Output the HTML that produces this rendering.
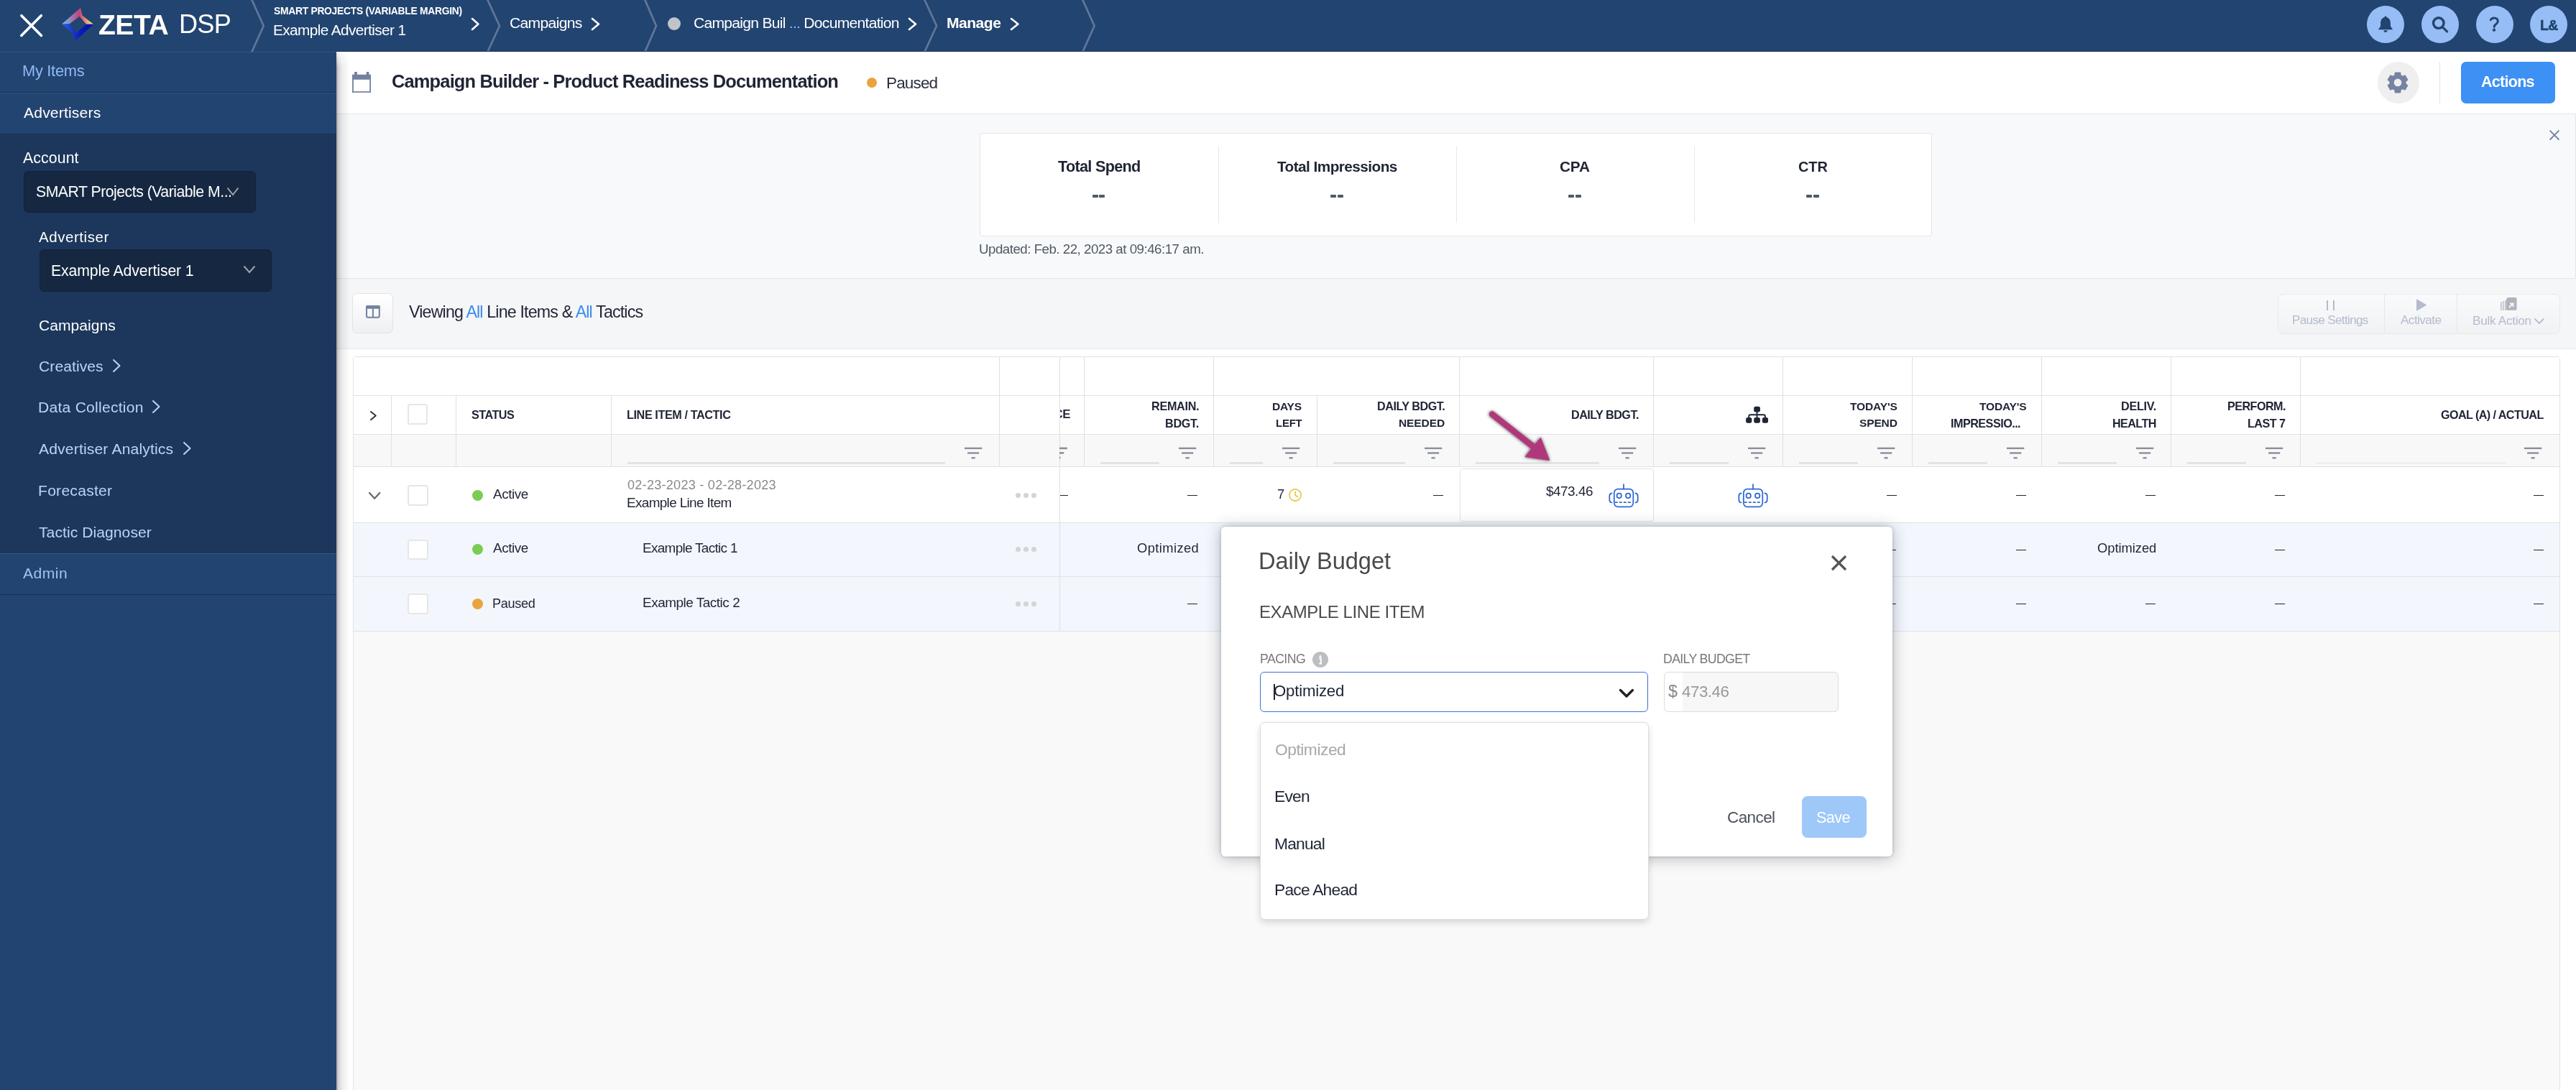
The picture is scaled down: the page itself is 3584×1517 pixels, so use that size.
<!DOCTYPE html>
<html><head><meta charset="utf-8"><style>
html,body{margin:0;padding:0;width:3584px;height:1517px;overflow:hidden;background:#fff}
body{position:relative;font-family:"Liberation Sans",sans-serif}
.t{position:absolute;white-space:nowrap;line-height:1em;will-change:transform}
svg{overflow:visible}
</style></head><body>
<div style="position:absolute;left:0.00px;top:0.00px;width:3584.00px;height:72.00px;background:#224470"></div>
<svg style="position:absolute;left:26px;top:17px" width="36" height="36" viewBox="0 0 36 36"><path d="M3.9 4.7L31.5 32.4M31.3 4.7L3.8 32.4" stroke="#fff" stroke-width="3.6" stroke-linecap="round"/></svg>
<svg style="position:absolute;left:84px;top:9px" width="50" height="50" viewBox="84 9 50 50">
<defs>
<linearGradient id="lg1" x1="86" y1="0" x2="130" y2="0" gradientUnits="userSpaceOnUse"><stop offset="0" stop-color="#5ec8f8"/><stop offset="0.55" stop-color="#c8407a"/><stop offset="1" stop-color="#fff27a"/></linearGradient>
<linearGradient id="lg2" x1="86" y1="0" x2="130" y2="0" gradientUnits="userSpaceOnUse"><stop offset="0" stop-color="#2a62e0"/><stop offset="0.6" stop-color="#0a1ab8"/><stop offset="1" stop-color="#0010a8"/></linearGradient>
</defs>
<path d="M86 33.6 L112 11 L114.5 21.5 L130 33.7 L120 33.7 L110.5 22.8 L96.5 33.6 Z" fill="url(#lg1)"/>
<path d="M86 33.6 L96.5 33.6 L106.2 46 L120 33.7 L130 33.7 L104.5 57 L102.3 47.5 Z" fill="url(#lg2)"/>
</svg>
<div class="t" id="zeta" style="top:14.93px;font-size:39.07px;color:#fff;font-weight:700;letter-spacing:-0.499px;left:137.06px;">ZETA</div>
<div class="t" id="dsp" style="top:16.38px;font-size:36.17px;color:#fff;letter-spacing:-0.789px;left:249.12px;">DSP</div>
<svg style="position:absolute;left:348.8px;top:0" width="22" height="72" viewBox="0 0 22 72"><path d="M1 -1 L17.7 36 L1 73" fill="none" stroke="#62769a" stroke-width="2.7"/></svg>
<svg style="position:absolute;left:677.0px;top:0" width="22" height="72" viewBox="0 0 22 72"><path d="M1 -1 L18.0 36 L1 73" fill="none" stroke="#62769a" stroke-width="2.7"/></svg>
<svg style="position:absolute;left:896.0px;top:0" width="22" height="72" viewBox="0 0 22 72"><path d="M1 -1 L17.0 36 L1 73" fill="none" stroke="#62769a" stroke-width="2.7"/></svg>
<svg style="position:absolute;left:1284.6px;top:0" width="22" height="72" viewBox="0 0 22 72"><path d="M1 -1 L18.1 36 L1 73" fill="none" stroke="#62769a" stroke-width="2.7"/></svg>
<svg style="position:absolute;left:1505.0px;top:0" width="22" height="72" viewBox="0 0 22 72"><path d="M1 -1 L17.6 36 L1 73" fill="none" stroke="#62769a" stroke-width="2.7"/></svg>
<div class="t" id="bc_acct" style="top:8.80px;font-size:13.83px;color:#fff;font-weight:700;letter-spacing:-0.262px;left:380.84px;">SMART PROJECTS (VARIABLE MARGIN)</div>
<div class="t" id="bc_adv" style="top:32.42px;font-size:20.76px;color:#fff;letter-spacing:-0.576px;left:379.79px;">Example Advertiser 1</div>
<svg style="position:absolute;left:652.6px;top:22.0px" width="16.4" height="23.0" viewBox="652.6 22.0 16.4 23.0"><path d="M656.6 26.0 L665.0 33.5 L656.6 41.0" fill="none" stroke="#fff" stroke-width="2.6" stroke-linecap="round" stroke-linejoin="round"/></svg>
<div class="t" id="bc_camp" style="top:21.16px;font-size:21.08px;color:#fff;letter-spacing:-0.661px;left:709.07px;">Campaigns</div>
<svg style="position:absolute;left:820.0px;top:22.0px" width="17.0" height="23.0" viewBox="820.0 22.0 17.0 23.0"><path d="M824.0 26.0 L833.0 33.5 L824.0 41.0" fill="none" stroke="#fff" stroke-width="2.6" stroke-linecap="round" stroke-linejoin="round"/></svg>
<div style="position:absolute;left:928.6px;top:24px;width:18px;height:18px;border-radius:50%;background:#c0c4ca"></div>
<div class="t" id="bc_cb" style="top:21.16px;font-size:21.08px;color:#fff;letter-spacing:-0.723px;left:964.87px;">Campaign Buil <span style="color:#8ab8f8">...</span> Documentation</div>
<svg style="position:absolute;left:1261.0px;top:22.0px" width="17.0" height="23.0" viewBox="1261.0 22.0 17.0 23.0"><path d="M1265.0 26.0 L1274.0 33.5 L1265.0 41.0" fill="none" stroke="#fff" stroke-width="2.6" stroke-linecap="round" stroke-linejoin="round"/></svg>
<div class="t" id="bc_man" style="top:21.16px;font-size:21.08px;color:#fff;font-weight:700;letter-spacing:-0.519px;left:1317.15px;">Manage</div>
<svg style="position:absolute;left:1402.6px;top:22.0px" width="17.4" height="23.0" viewBox="1402.6 22.0 17.4 23.0"><path d="M1406.6 26.0 L1416.0 33.5 L1406.6 41.0" fill="none" stroke="#fff" stroke-width="2.6" stroke-linecap="round" stroke-linejoin="round"/></svg>
<div style="position:absolute;left:3293px;top:8px;width:52px;height:52px;border-radius:50%;background:#97bdf6"></div>
<div style="position:absolute;left:3369px;top:8px;width:52px;height:52px;border-radius:50%;background:#97bdf6"></div>
<div style="position:absolute;left:3445px;top:8px;width:52px;height:52px;border-radius:50%;background:#97bdf6"></div>
<div style="position:absolute;left:3520px;top:8px;width:52px;height:52px;border-radius:50%;background:#97bdf6"></div>
<svg style="position:absolute;left:3303px;top:18px" width="32" height="32" viewBox="3303 18 32 32"><path d="M3319 22.5 c1 0 1.5 .7 1.5 1.5 c3.8 1.2 5.4 4.2 5.4 8.2 l0 3.2 c0 1.6 1.6 3.6 2.8 4.9 l0 1 l-19.4 0 l0 -1 c1.2 -1.3 2.8 -3.3 2.8 -4.9 l0 -3.2 c0 -4 1.6 -7 5.4 -8.2 c0 -.8 .5 -1.5 1.5 -1.5z" fill="#22446e"/><path d="M3316.3 42.2 l5.4 0 c0 1.6 -1.2 2.8 -2.7 2.8 c-1.5 0 -2.7 -1.2 -2.7 -2.8z" fill="#22446e"/></svg>
<svg style="position:absolute;left:3379px;top:18px" width="32" height="32" viewBox="3379 18 32 32"><circle cx="3392.8" cy="32.1" r="7.3" fill="none" stroke="#22446e" stroke-width="3.4"/><path d="M3398.2 37.6 L3404.6 43.8" stroke="#22446e" stroke-width="3.2" stroke-linecap="round"/></svg>
<svg style="position:absolute;left:3455px;top:18px" width="32" height="32" viewBox="3455 18 32 32"><path d="M3465.3 27.6 c1 -1.7 2.6 -2.6 4.8 -2.6 c3 0 5.2 1.8 5.2 4.4 c0 2.1 -1.2 3.2 -2.8 4.4 c-1.4 1 -2.2 1.9 -2.3 3.6" fill="none" stroke="#22446e" stroke-width="3" stroke-linecap="round"/><path d="M3467.9 40.9 L3470.9 39.8 L3472.1 42.6 L3469.1 43.7 Z" fill="#22446e" stroke="#22446e" stroke-width="0.8" stroke-linejoin="round"/></svg>
<div class="t" id="lamp" style="top:25.57px;font-size:19.29px;color:#22446e;font-weight:700;letter-spacing:-0.561px;left:3533.63px;-webkit-text-stroke:0.6px #22446e;">L&amp;</div>
<div style="position:absolute;left:0.00px;top:72.00px;width:468.00px;height:1445.00px;background:#224470"></div>
<div style="position:absolute;left:0.00px;top:72.00px;width:468.00px;height:1.00px;background:#2a5c80"></div>
<div style="position:absolute;left:0.00px;top:128.00px;width:468.00px;height:1.00px;background:#17304f"></div>
<div style="position:absolute;left:0.00px;top:129.00px;width:468.00px;height:1.00px;background:#2a5c80"></div>
<div style="position:absolute;left:0.00px;top:186.00px;width:468.00px;height:584.00px;background:#1d375c"></div>
<div style="position:absolute;left:0.00px;top:186.00px;width:468.00px;height:1.00px;background:#17304f"></div>
<div style="position:absolute;left:0.00px;top:770.00px;width:468.00px;height:1.00px;background:#2a5c80"></div>
<div style="position:absolute;left:0.00px;top:827.00px;width:468.00px;height:1.00px;background:#17304f"></div>
<div class="t" id="s_my" style="top:87.54px;font-size:21.80px;color:#8fb9f6;letter-spacing:-0.266px;left:31.24px;">My Items</div>
<div class="t" id="s_adv" style="top:145.96px;font-size:21.08px;color:#fff;letter-spacing:0.177px;left:32.67px;">Advertisers</div>
<div class="t" id="s_acct" style="top:208.94px;font-size:21.22px;color:#fff;letter-spacing:0.141px;left:32.18px;">Account</div>
<div style="position:absolute;left:32.50px;top:237.60px;width:323.30px;height:58.60px;background:#162841;border:1px solid #122139;box-sizing:border-box;border-radius:6px"></div>
<div class="t" id="s_acctv" style="top:255.64px;font-size:21.22px;color:#fff;letter-spacing:-0.484px;left:50.46px;">SMART Projects (Variable M...</div>
<svg style="position:absolute;left:314px;top:259px" width="22" height="16" viewBox="0 0 22 16"><path d="M2.5 2.5 L10 12 L17.5 2.5" fill="none" stroke="#a3a3a6" stroke-width="2"/></svg>
<div class="t" id="s_advl" style="top:319.65px;font-size:20.49px;color:#fff;letter-spacing:0.559px;left:54.18px;">Advertiser</div>
<div style="position:absolute;left:54.50px;top:347.00px;width:323.00px;height:59.30px;background:#162841;border:1px solid #122139;box-sizing:border-box;border-radius:6px"></div>
<div class="t" id="s_advv" style="top:366.34px;font-size:21.22px;color:#fff;letter-spacing:-0.096px;left:71.27px;">Example Advertiser 1</div>
<svg style="position:absolute;left:337px;top:368px" width="22" height="16" viewBox="0 0 22 16"><path d="M2.5 2.5 L10 11 L17.5 2.5" fill="none" stroke="#a3a3a6" stroke-width="2"/></svg>
<div class="t" id="s_camp" style="top:441.66px;font-size:21.08px;color:#fff;letter-spacing:0.020px;left:53.57px;">Campaigns</div>
<div class="t" id="s_cre" style="top:499.16px;font-size:21.08px;color:#bcd3f5;letter-spacing:0.075px;left:53.57px;">Creatives</div>
<svg style="position:absolute;left:153.5px;top:497.0px" width="16.5" height="24.0" viewBox="153.5 497.0 16.5 24.0"><path d="M157.5 501.0 L166.0 509.0 L157.5 517.0" fill="none" stroke="#bcd3f5" stroke-width="2.0" stroke-linecap="round" stroke-linejoin="round"/></svg>
<div class="t" id="s_dc" style="top:556.16px;font-size:21.08px;color:#bcd3f5;letter-spacing:0.252px;left:52.77px;">Data Collection</div>
<svg style="position:absolute;left:209.0px;top:554.0px" width="16.5" height="24.0" viewBox="209.0 554.0 16.5 24.0"><path d="M213.0 558.0 L221.5 566.0 L213.0 574.0" fill="none" stroke="#bcd3f5" stroke-width="2.0" stroke-linecap="round" stroke-linejoin="round"/></svg>
<div class="t" id="s_aa" style="top:614.16px;font-size:21.08px;color:#bcd3f5;letter-spacing:0.166px;left:54.17px;">Advertiser Analytics</div>
<svg style="position:absolute;left:251.5px;top:612.0px" width="16.5" height="24.0" viewBox="251.5 612.0 16.5 24.0"><path d="M255.5 616.0 L264.0 624.0 L255.5 632.0" fill="none" stroke="#bcd3f5" stroke-width="2.0" stroke-linecap="round" stroke-linejoin="round"/></svg>
<div class="t" id="s_fc" style="top:672.46px;font-size:21.08px;color:#bcd3f5;letter-spacing:0.257px;left:52.77px;">Forecaster</div>
<div class="t" id="s_td" style="top:729.66px;font-size:21.08px;color:#bcd3f5;letter-spacing:0.065px;left:54.00px;">Tactic Diagnoser</div>
<div class="t" id="s_admin" style="top:786.96px;font-size:21.08px;color:#9ec4f4;letter-spacing:0.476px;left:32.07px;">Admin</div>
<div style="position:absolute;left:468.00px;top:72.00px;width:3116.00px;height:1445.00px;background:#fff"></div>
<div style="position:absolute;left:468.00px;top:158.00px;width:3116.00px;height:1.00px;background:#e6e7ea"></div>
<div style="position:absolute;left:468.00px;top:71.00px;width:3116.00px;height:1.00px;background:#1a365c"></div>
<svg style="position:absolute;left:0;top:0" width="3584" height="200" viewBox="0 0 3584 200"><g fill="#7380a0"><rect x="490.1" y="103.8" width="25.9" height="7"/><rect x="490.1" y="103.8" width="1.8" height="25"/><rect x="514.2" y="103.8" width="1.8" height="25"/><rect x="490.1" y="127.1" width="25.9" height="1.7"/><rect x="493.1" y="100" width="3.8" height="4.5"/><rect x="509.7" y="100" width="3.7" height="4.5"/></g></svg>
<div class="t" id="title" style="top:101.46px;font-size:25.45px;color:#1f2435;font-weight:700;letter-spacing:-0.837px;left:545.09px;">Campaign Builder - Product Readiness Documentation</div>
<div style="position:absolute;left:1206px;top:108px;width:14px;height:14px;border-radius:50%;background:#eda33b"></div>
<div class="t" id="paused" style="top:104.53px;font-size:22.53px;color:#2a2f3f;letter-spacing:-0.852px;left:1233.20px;">Paused</div>
<div style="position:absolute;left:3308px;top:86px;width:58px;height:58px;border-radius:50%;background:#efefef"></div>
<svg style="position:absolute;left:3320px;top:98.5px" width="32" height="32" viewBox="-16 -16 32 32"><path d="M-4.36 -10.32 L-3.82 -14.09 L3.82 -14.09 L4.36 -10.32 A11.20 11.20 0 0 1 6.75 -8.94 L6.75 -8.94 L10.29 -10.36 L14.11 -3.73 L11.11 -1.38 A11.20 11.20 0 0 1 11.11 1.38 L11.11 1.38 L14.11 3.73 L10.29 10.36 L6.75 8.94 A11.20 11.20 0 0 1 4.36 10.32 L4.36 10.32 L3.82 14.09 L-3.82 14.09 L-4.36 10.32 A11.20 11.20 0 0 1 -6.75 8.94 L-6.75 8.94 L-10.29 10.36 L-14.11 3.73 L-11.11 1.38 A11.20 11.20 0 0 1 -11.11 -1.38 L-11.11 -1.38 L-14.11 -3.73 L-10.29 -10.36 L-6.75 -8.94 A11.20 11.20 0 0 1 -4.36 -10.32 Z" fill="#7682a2" stroke="#7682a2" stroke-width="0.8" stroke-linejoin="round"/><circle cx="0" cy="-0.1" r="5.3" fill="#efefef"/></svg>
<div style="position:absolute;left:3394.00px;top:86.00px;width:1.00px;height:58.00px;background:#e2e2e2"></div>
<div style="position:absolute;left:3424.00px;top:86.00px;width:131.00px;height:58.00px;background:#3d90f4;border-radius:7px"></div>
<div class="t" id="actions" style="top:103.81px;font-size:21.49px;color:#fff;font-weight:700;letter-spacing:-0.707px;left:3452.28px;">Actions</div>
<div style="position:absolute;left:468.00px;top:159.00px;width:3116.00px;height:228.00px;background:#f8f9fb"></div>
<div style="position:absolute;left:468.00px;top:387.00px;width:3116.00px;height:1.00px;background:#e4e6ea"></div>
<div style="position:absolute;left:3583.00px;top:159.00px;width:1.00px;height:228.00px;background:#e4e6ea"></div>
<div style="position:absolute;left:1363.00px;top:185.00px;width:1325.00px;height:144.00px;background:#fff;border:1px solid #e3e5e9;border-radius:4px;box-sizing:border-box"></div>
<div style="position:absolute;left:1694.60px;top:204.00px;width:1.00px;height:106.00px;background:#e6e7ea"></div>
<div style="position:absolute;left:2025.60px;top:204.00px;width:1.00px;height:106.00px;background:#e6e7ea"></div>
<div style="position:absolute;left:2356.60px;top:204.00px;width:1.00px;height:106.00px;background:#e6e7ea"></div>
<div class="t" id="sum0" style="top:221.49px;font-size:21.63px;color:#1f2435;font-weight:700;letter-spacing:-0.683px;left:1471.93px;">Total Spend</div>
<div style="position:absolute;left:1519.50px;top:268.00px;width:19.00px;height:8.00px;background:transparent"></div>
<div style="position:absolute;left:1519.7px;top:271px;width:8.1px;height:3.8px;background:#4f5b63;border-radius:1px"></div><div style="position:absolute;left:1529.4px;top:271px;width:8.1px;height:3.8px;background:#4f5b63;border-radius:1px"></div>
<div class="t" id="sum1" style="top:222.22px;font-size:20.76px;color:#1f2435;font-weight:700;letter-spacing:-0.540px;left:1776.65px;">Total Impressions</div>
<div style="position:absolute;left:1850.70px;top:268.00px;width:19.00px;height:8.00px;background:transparent"></div>
<div style="position:absolute;left:1850.9px;top:271px;width:8.1px;height:3.8px;background:#4f5b63;border-radius:1px"></div><div style="position:absolute;left:1860.6px;top:271px;width:8.1px;height:3.8px;background:#4f5b63;border-radius:1px"></div>
<div class="t" id="sum2" style="top:222.22px;font-size:20.76px;color:#1f2435;font-weight:700;letter-spacing:-0.132px;left:2170.32px;">CPA</div>
<div style="position:absolute;left:2181.90px;top:268.00px;width:19.00px;height:8.00px;background:transparent"></div>
<div style="position:absolute;left:2182.1px;top:271px;width:8.1px;height:3.8px;background:#4f5b63;border-radius:1px"></div><div style="position:absolute;left:2191.8px;top:271px;width:8.1px;height:3.8px;background:#4f5b63;border-radius:1px"></div>
<div class="t" id="sum3" style="top:222.93px;font-size:19.93px;color:#1f2435;font-weight:700;letter-spacing:-0.016px;left:2502.06px;">CTR</div>
<div style="position:absolute;left:2513.10px;top:268.00px;width:19.00px;height:8.00px;background:transparent"></div>
<div style="position:absolute;left:2513.3px;top:271px;width:8.1px;height:3.8px;background:#4f5b63;border-radius:1px"></div><div style="position:absolute;left:2523.0px;top:271px;width:8.1px;height:3.8px;background:#4f5b63;border-radius:1px"></div>
<div class="t" id="updated" style="top:338.17px;font-size:18.70px;color:#4f5a63;letter-spacing:-0.487px;left:1361.93px;">Updated: Feb. 22, 2023 at 09:46:17 am.</div>
<svg style="position:absolute;left:3545px;top:179px" width="18" height="18" viewBox="0 0 18 18"><path d="M2.6 2.7 L15.4 15.5 M15.4 2.7 L2.6 15.5" stroke="#7380a0" stroke-width="1.8"/></svg>
<div style="position:absolute;left:468.00px;top:388.00px;width:3116.00px;height:97.00px;background:#f5f6f8"></div>
<div style="position:absolute;left:468.00px;top:485.00px;width:3116.00px;height:1.00px;background:#e6e7ea"></div>
<div style="position:absolute;left:490.30px;top:408.30px;width:56.40px;height:56.20px;background:linear-gradient(#ffffff,#f9f9fa 40%,#eff0f2);border:1px solid #e2e3e5;border-radius:7px;box-sizing:border-box"></div>
<svg style="position:absolute;left:507px;top:423px" width="24" height="22" viewBox="0 0 24 22"><rect x="3" y="3" width="17.8" height="15.8" rx="2" fill="none" stroke="#7380a0" stroke-width="2"/><rect x="2.2" y="2.1" width="19.4" height="4.6" rx="1.2" fill="#7380a0"/><path d="M11.9 5 V18.5" stroke="#7380a0" stroke-width="2"/></svg>
<div class="t" id="viewing" style="top:423.01px;font-size:23.26px;color:#1f2435;letter-spacing:-0.851px;left:568.64px;">Viewing <span style="color:#3d8cf0">All</span> Line Items &amp; <span style="color:#3d8cf0">All</span> Tactics</div>
<div style="position:absolute;left:3168.50px;top:408.60px;width:393.00px;height:56.00px;background:linear-gradient(#f9fafb,#f1f2f4);border:1px solid #e8e9ec;border-radius:8px;box-sizing:border-box"></div>
<div style="position:absolute;left:3317.00px;top:409.00px;width:1.00px;height:54.00px;background:#e6e7ea"></div>
<div style="position:absolute;left:3418.00px;top:409.00px;width:1.00px;height:54.00px;background:#e6e7ea"></div>
<div style="position:absolute;left:3237.40px;top:417.80px;width:1.70px;height:14.00px;background:#b3bbcc"></div>
<div style="position:absolute;left:3246.40px;top:417.80px;width:1.70px;height:14.00px;background:#b3bbcc"></div>
<svg style="position:absolute;left:3360px;top:415px" width="18" height="20" viewBox="0 0 18 20"><path d="M2 2.5 Q2 1 3.3 1.8 L15.2 8.8 Q16.3 9.5 15.2 10.2 L3.3 17.2 Q2 18 2 16.5 Z" fill="#b3bbcc"/></svg>
<svg style="position:absolute;left:3477px;top:413px" width="26" height="21" viewBox="3477 413 26 21"><path d="M3480 420 Q3479.3 426 3480 432 M3483 419 Q3482.3 425.5 3483 432 M3486 418 Q3485.3 425 3486 432" fill="none" stroke="#b0b4bc" stroke-width="1.3"/><path d="M3489 414 H3500 Q3501.5 414 3501.5 415.5 V430.3 Q3501.5 431.8 3500 431.8 H3488.5 Q3487 431.8 3487 430.3 V416 Z" fill="#b0b4bc"/><path d="M3491 428 L3495.5 423 M3492 422.5 L3496.5 422.5 L3496.5 427" fill="none" stroke="#f4f5f7" stroke-width="2"/></svg>
<div class="t" id="tb_pause" style="top:436.98px;font-size:17.15px;color:#b3bbcc;letter-spacing:-0.683px;left:3188.55px;">Pause Settings</div>
<div class="t" id="tb_act" style="top:436.98px;font-size:17.15px;color:#b3bbcc;letter-spacing:-0.560px;left:3339.68px;">Activate</div>
<div class="t" id="tb_bulk" style="top:438.48px;font-size:17.15px;color:#b3bbcc;letter-spacing:-0.286px;left:3439.55px;">Bulk Action</div>
<svg style="position:absolute;left:3523.0px;top:440.0px" width="19.7" height="14.0" viewBox="3523.0 440.0 19.7 14.0"><path d="M3527.0 444.0 L3532.8 450.0 L3538.7 444.0" fill="none" stroke="#b3bbcc" stroke-width="1.8" stroke-linecap="round" stroke-linejoin="round"/></svg>
<div style="position:absolute;left:468.00px;top:486.00px;width:3116.00px;height:1031.00px;background:#fff"></div>
<div style="position:absolute;left:490.50px;top:496.00px;width:3071.00px;height:1021.00px;background:#f9f9f9;border:1px solid #e2e2e2;border-bottom:none;box-sizing:border-box;border-radius:4px 4px 0 0"></div>
<div style="position:absolute;left:491.50px;top:497.00px;width:3069.00px;height:107.00px;background:#fff"></div>
<div style="position:absolute;left:491.50px;top:604.00px;width:3069.00px;height:45.00px;background:#f8f8f8"></div>
<div style="position:absolute;left:491.50px;top:649.00px;width:3069.00px;height:78.00px;background:#fff"></div>
<div style="position:absolute;left:491.50px;top:727.00px;width:3069.00px;height:151.00px;background:#f3f6fd"></div>
<div style="position:absolute;left:490.50px;top:550.00px;width:3071.00px;height:1.30px;background:#e2e2e2"></div>
<div style="position:absolute;left:490.50px;top:604.00px;width:3071.00px;height:1.30px;background:#e2e2e2"></div>
<div style="position:absolute;left:490.50px;top:649.00px;width:3071.00px;height:1.30px;background:#e2e2e2"></div>
<div style="position:absolute;left:490.50px;top:727.00px;width:3071.00px;height:1.30px;background:#e2e2e2"></div>
<div style="position:absolute;left:490.50px;top:802.00px;width:3071.00px;height:1.30px;background:#e2e2e2"></div>
<div style="position:absolute;left:490.50px;top:878.00px;width:3071.00px;height:1.30px;background:#e2e2e2"></div>
<div style="position:absolute;left:544.00px;top:550.00px;width:1.20px;height:99.00px;background:#e0e0e0"></div>
<div style="position:absolute;left:634.00px;top:550.00px;width:1.20px;height:99.00px;background:#e0e0e0"></div>
<div style="position:absolute;left:850.00px;top:550.00px;width:1.20px;height:99.00px;background:#e0e0e0"></div>
<div style="position:absolute;left:1832.00px;top:550.00px;width:1.20px;height:99.00px;background:#e0e0e0"></div>
<div style="position:absolute;left:1390.00px;top:496.00px;width:1.20px;height:153.00px;background:#e0e0e0"></div>
<div style="position:absolute;left:1508.00px;top:496.00px;width:1.20px;height:153.00px;background:#e0e0e0"></div>
<div style="position:absolute;left:1688.00px;top:496.00px;width:1.20px;height:153.00px;background:#e0e0e0"></div>
<div style="position:absolute;left:2030.00px;top:496.00px;width:1.20px;height:153.00px;background:#e0e0e0"></div>
<div style="position:absolute;left:2300.00px;top:496.00px;width:1.20px;height:153.00px;background:#e0e0e0"></div>
<div style="position:absolute;left:2480.00px;top:496.00px;width:1.20px;height:153.00px;background:#e0e0e0"></div>
<div style="position:absolute;left:2660.00px;top:496.00px;width:1.20px;height:153.00px;background:#e0e0e0"></div>
<div style="position:absolute;left:2840.00px;top:496.00px;width:1.20px;height:153.00px;background:#e0e0e0"></div>
<div style="position:absolute;left:3020.00px;top:496.00px;width:1.20px;height:153.00px;background:#e0e0e0"></div>
<div style="position:absolute;left:3200.00px;top:496.00px;width:1.20px;height:153.00px;background:#e0e0e0"></div>
<div style="position:absolute;left:1474.00px;top:496.00px;width:1.20px;height:382.00px;background:#e0e0e0"></div>
<div class="t" id="h_status" style="top:569.10px;font-size:16.19px;color:#1f2435;font-weight:700;letter-spacing:-0.531px;left:655.79px;">STATUS</div>
<div class="t" id="h_li" style="top:568.80px;font-size:16.19px;color:#1f2435;font-weight:700;letter-spacing:-0.399px;left:871.69px;">LINE ITEM / TACTIC</div>
<div style="position:absolute;left:1475px;top:560px;width:33px;height:30px;overflow:hidden"><div class="t" style="right:19.5px;top:8.73px;font-size:16.86px;font-weight:700;letter-spacing:-0.6px;color:#1f2435">SPACE</div></div>
<div class="t" id="h2a0" style="top:557.20px;font-size:16.19px;color:#1f2435;font-weight:700;letter-spacing:-0.297px;right:1915.85px;">REMAIN.</div>
<div class="t" id="h2b0" style="top:580.60px;font-size:16.19px;color:#1f2435;font-weight:700;letter-spacing:-0.309px;right:1915.87px;">BDGT.</div>
<div class="t" id="h2a1" style="top:557.75px;font-size:15.54px;color:#1f2435;font-weight:700;letter-spacing:-0.191px;right:1772.59px;">DAYS</div>
<div class="t" id="h2b1" style="top:581.67px;font-size:14.92px;color:#1f2435;font-weight:700;letter-spacing:-0.210px;right:1773.09px;">LEFT</div>
<div class="t" id="h2a2" style="top:557.20px;font-size:16.19px;color:#1f2435;font-weight:700;letter-spacing:-0.499px;right:1574.03px;">DAILY BDGT.</div>
<div class="t" id="h2b2" style="top:581.15px;font-size:15.54px;color:#1f2435;font-weight:700;letter-spacing:-0.105px;right:1574.16px;">NEEDED</div>
<div class="t" id="h2a3" style="top:557.75px;font-size:15.54px;color:#1f2435;font-weight:700;letter-spacing:-0.137px;right:944.63px;">TODAY'S</div>
<div class="t" id="h2b3" style="top:581.15px;font-size:15.54px;color:#1f2435;font-weight:700;letter-spacing:-0.152px;right:944.66px;">SPEND</div>
<div class="t" id="h2a4" style="top:557.75px;font-size:15.54px;color:#1f2435;font-weight:700;letter-spacing:-0.178px;right:764.83px;">TODAY'S</div>
<div class="t" id="h2b4" style="top:580.60px;font-size:16.19px;color:#1f2435;font-weight:700;letter-spacing:-0.529px;right:772.45px;">IMPRESSIO...</div>
<div class="t" id="h2a5" style="top:557.20px;font-size:16.19px;color:#1f2435;font-weight:700;letter-spacing:-0.263px;right:583.79px;">DELIV.</div>
<div class="t" id="h2b5" style="top:580.60px;font-size:16.19px;color:#1f2435;font-weight:700;letter-spacing:-0.601px;right:584.26px;">HEALTH</div>
<div class="t" id="h2a6" style="top:557.20px;font-size:16.19px;color:#1f2435;font-weight:700;letter-spacing:-0.565px;right:403.91px;">PERFORM.</div>
<div class="t" id="h2b6" style="top:580.60px;font-size:16.19px;color:#1f2435;font-weight:700;letter-spacing:-0.570px;right:404.19px;">LAST 7</div>
<div class="t" id="h_db" style="top:569.30px;font-size:16.19px;color:#1f2435;font-weight:700;letter-spacing:-0.540px;right:1304.44px;">DAILY BDGT.</div>
<div class="t" id="h_goal" style="top:569.30px;font-size:16.19px;color:#1f2435;font-weight:700;letter-spacing:-0.597px;right:45.12px;">GOAL (A) / ACTUAL</div>
<svg style="position:absolute;left:2427px;top:563px" width="36" height="30" viewBox="0 0 36 30"><g fill="#1f2435"><rect x="13.2" y="2.7" width="8.7" height="7.9" rx="2.4"/><rect x="2.1" y="18" width="8.2" height="7.8" rx="2.4"/><rect x="13.2" y="18" width="8.7" height="7.8" rx="2.4"/><rect x="24.8" y="18" width="8.2" height="7.8" rx="2.4"/></g><path d="M17.5 9 V18.5 M6.2 18.5 V16.6 Q6.2 14.3 8.5 14.3 H26.6 Q28.9 14.3 28.9 16.6 V18.5" fill="none" stroke="#1f2435" stroke-width="1.9"/></svg>
<svg style="position:absolute;left:511.5px;top:568.8px" width="14.8" height="19.2" viewBox="511.5 568.8 14.8 19.2"><path d="M515.5 572.8 L522.3 578.4 L515.5 584.0" fill="none" stroke="#333" stroke-width="2.0" stroke-linecap="round" stroke-linejoin="round"/></svg>
<div style="position:absolute;left:566.50px;top:562.00px;width:28.30px;height:28.50px;border:2.8px solid #e6e6e6;border-radius:3.5px;box-sizing:border-box;background:#fff"></div>
<svg style="position:absolute;left:1341.6px;top:622px" width="25" height="18" viewBox="0 0 25 18"><g fill="#8a8f99"><rect x="0" y="0.7" width="24.3" height="2.4"/><rect x="4.1" y="7.3" width="16.1" height="2.4"/><rect x="9.5" y="14.1" width="5.2" height="2.4"/></g></svg>
<div style="position:absolute;left:872.70px;top:643.00px;width:442.80px;height:2.60px;background:#e3e3e3"></div>
<svg style="position:absolute;left:1639.6px;top:622px" width="25" height="18" viewBox="0 0 25 18"><g fill="#8a8f99"><rect x="0" y="0.7" width="24.3" height="2.4"/><rect x="4.1" y="7.3" width="16.1" height="2.4"/><rect x="9.5" y="14.1" width="5.2" height="2.4"/></g></svg>
<div style="position:absolute;left:1530.70px;top:643.00px;width:82.80px;height:2.60px;background:#e3e3e3"></div>
<svg style="position:absolute;left:1783.6px;top:622px" width="25" height="18" viewBox="0 0 25 18"><g fill="#8a8f99"><rect x="0" y="0.7" width="24.3" height="2.4"/><rect x="4.1" y="7.3" width="16.1" height="2.4"/><rect x="9.5" y="14.1" width="5.2" height="2.4"/></g></svg>
<div style="position:absolute;left:1710.70px;top:643.00px;width:46.80px;height:2.60px;background:#e3e3e3"></div>
<svg style="position:absolute;left:1981.6px;top:622px" width="25" height="18" viewBox="0 0 25 18"><g fill="#8a8f99"><rect x="0" y="0.7" width="24.3" height="2.4"/><rect x="4.1" y="7.3" width="16.1" height="2.4"/><rect x="9.5" y="14.1" width="5.2" height="2.4"/></g></svg>
<div style="position:absolute;left:1854.70px;top:643.00px;width:100.80px;height:2.60px;background:#e3e3e3"></div>
<svg style="position:absolute;left:2251.6px;top:622px" width="25" height="18" viewBox="0 0 25 18"><g fill="#8a8f99"><rect x="0" y="0.7" width="24.3" height="2.4"/><rect x="4.1" y="7.3" width="16.1" height="2.4"/><rect x="9.5" y="14.1" width="5.2" height="2.4"/></g></svg>
<div style="position:absolute;left:2052.70px;top:643.00px;width:172.80px;height:2.60px;background:#e3e3e3"></div>
<svg style="position:absolute;left:2431.6px;top:622px" width="25" height="18" viewBox="0 0 25 18"><g fill="#8a8f99"><rect x="0" y="0.7" width="24.3" height="2.4"/><rect x="4.1" y="7.3" width="16.1" height="2.4"/><rect x="9.5" y="14.1" width="5.2" height="2.4"/></g></svg>
<div style="position:absolute;left:2322.70px;top:643.00px;width:82.80px;height:2.60px;background:#e3e3e3"></div>
<svg style="position:absolute;left:2611.6px;top:622px" width="25" height="18" viewBox="0 0 25 18"><g fill="#8a8f99"><rect x="0" y="0.7" width="24.3" height="2.4"/><rect x="4.1" y="7.3" width="16.1" height="2.4"/><rect x="9.5" y="14.1" width="5.2" height="2.4"/></g></svg>
<div style="position:absolute;left:2502.70px;top:643.00px;width:82.80px;height:2.60px;background:#e3e3e3"></div>
<svg style="position:absolute;left:2791.6px;top:622px" width="25" height="18" viewBox="0 0 25 18"><g fill="#8a8f99"><rect x="0" y="0.7" width="24.3" height="2.4"/><rect x="4.1" y="7.3" width="16.1" height="2.4"/><rect x="9.5" y="14.1" width="5.2" height="2.4"/></g></svg>
<div style="position:absolute;left:2682.70px;top:643.00px;width:82.80px;height:2.60px;background:#e3e3e3"></div>
<svg style="position:absolute;left:2971.6px;top:622px" width="25" height="18" viewBox="0 0 25 18"><g fill="#8a8f99"><rect x="0" y="0.7" width="24.3" height="2.4"/><rect x="4.1" y="7.3" width="16.1" height="2.4"/><rect x="9.5" y="14.1" width="5.2" height="2.4"/></g></svg>
<div style="position:absolute;left:2862.70px;top:643.00px;width:82.80px;height:2.60px;background:#e3e3e3"></div>
<svg style="position:absolute;left:3151.6px;top:622px" width="25" height="18" viewBox="0 0 25 18"><g fill="#8a8f99"><rect x="0" y="0.7" width="24.3" height="2.4"/><rect x="4.1" y="7.3" width="16.1" height="2.4"/><rect x="9.5" y="14.1" width="5.2" height="2.4"/></g></svg>
<div style="position:absolute;left:3042.70px;top:643.00px;width:82.80px;height:2.60px;background:#e3e3e3"></div>
<svg style="position:absolute;left:3512.1px;top:622px" width="25" height="18" viewBox="0 0 25 18"><g fill="#8a8f99"><rect x="0" y="0.7" width="24.3" height="2.4"/><rect x="4.1" y="7.3" width="16.1" height="2.4"/><rect x="9.5" y="14.1" width="5.2" height="2.4"/></g></svg>
<div style="position:absolute;left:3222.70px;top:644.00px;width:263.10px;height:1.30px;background:#e3e3e3"></div>
<div style="position:absolute;left:1474px;top:620px;width:11px;height:22px;overflow:hidden"><svg style="position:absolute;left:-14px;top:2px" width="25" height="18" viewBox="0 0 25 18"><g fill="#8a8f99"><rect x="0" y="0.6" width="24.8" height="2.6"/><rect x="4.6" y="7.1" width="15.6" height="2.6"/><rect x="9.4" y="13.6" width="6" height="2.6"/></g></svg></div>
<svg style="position:absolute;left:510.0px;top:682.2px" width="22.3" height="15.7" viewBox="510.0 682.2 22.3 15.7"><path d="M514.0 686.2 L521.1 693.9 L528.3 686.2" fill="none" stroke="#666" stroke-width="2.2" stroke-linecap="round" stroke-linejoin="round"/></svg>
<div style="position:absolute;left:567.40px;top:675.00px;width:28.60px;height:28.60px;border:2.8px solid #e6e6e6;border-radius:3.5px;box-sizing:border-box;background:#fff"></div>
<div style="position:absolute;left:567.40px;top:750.50px;width:28.60px;height:28.60px;border:2.8px solid #e6e6e6;border-radius:3.5px;box-sizing:border-box;background:#fff"></div>
<div style="position:absolute;left:567.40px;top:826.00px;width:28.60px;height:28.60px;border:2.8px solid #e6e6e6;border-radius:3.5px;box-sizing:border-box;background:#fff"></div>
<div style="position:absolute;left:657.0px;top:681.8px;width:15.0px;height:15.0px;border-radius:50%;background:#78cd52"></div>
<div class="t" id="r1_st" style="top:678.91px;font-size:18.90px;color:#1f2435;letter-spacing:-0.453px;left:686.18px;">Active</div>
<div style="position:absolute;left:657.0px;top:757.3px;width:15.0px;height:15.0px;border-radius:50%;background:#78cd52"></div>
<div class="t" id="r2_st" style="top:754.41px;font-size:18.90px;color:#1f2435;letter-spacing:-0.453px;left:686.18px;">Active</div>
<div style="position:absolute;left:657.0px;top:832.8px;width:15.0px;height:15.0px;border-radius:50%;background:#e9a43f"></div>
<div class="t" id="r3_st" style="top:830.54px;font-size:18.14px;color:#1f2435;letter-spacing:-0.330px;left:684.99px;">Paused</div>
<div class="t" id="r1_date" style="top:665.74px;font-size:18.02px;color:#8a8a8a;letter-spacing:0.283px;left:872.79px;">02-23-2023 - 02-28-2023</div>
<div class="t" id="r1_name" style="top:690.51px;font-size:18.90px;color:#1f2435;letter-spacing:-0.638px;left:871.92px;">Example Line Item</div>
<div class="t" id="r2_name" style="top:754.41px;font-size:18.90px;color:#1f2435;letter-spacing:-0.664px;left:893.62px;">Example Tactic 1</div>
<div class="t" id="r3_name" style="top:829.91px;font-size:18.90px;color:#1f2435;letter-spacing:-0.452px;left:893.62px;">Example Tactic 2</div>
<div style="position:absolute;left:1412.9px;top:685.7px;width:7.2px;height:7.2px;border-radius:50%;background:#d4d4d4"></div>
<div style="position:absolute;left:1423.9px;top:685.7px;width:7.2px;height:7.2px;border-radius:50%;background:#d4d4d4"></div>
<div style="position:absolute;left:1434.9px;top:685.7px;width:7.2px;height:7.2px;border-radius:50%;background:#d4d4d4"></div>
<div style="position:absolute;left:1412.9px;top:761.2px;width:7.2px;height:7.2px;border-radius:50%;background:#d4d4d4"></div>
<div style="position:absolute;left:1423.9px;top:761.2px;width:7.2px;height:7.2px;border-radius:50%;background:#d4d4d4"></div>
<div style="position:absolute;left:1434.9px;top:761.2px;width:7.2px;height:7.2px;border-radius:50%;background:#d4d4d4"></div>
<div style="position:absolute;left:1412.9px;top:836.7px;width:7.2px;height:7.2px;border-radius:50%;background:#d4d4d4"></div>
<div style="position:absolute;left:1423.9px;top:836.7px;width:7.2px;height:7.2px;border-radius:50%;background:#d4d4d4"></div>
<div style="position:absolute;left:1434.9px;top:836.7px;width:7.2px;height:7.2px;border-radius:50%;background:#d4d4d4"></div>
<div style="position:absolute;left:1474.60px;top:688.80px;width:11.40px;height:1.40px;background:#1f2435"></div>
<div style="position:absolute;left:1651.50px;top:688.80px;width:14.50px;height:1.40px;background:#1f2435"></div>
<div class="t" id="r2_opt" style="top:754.40px;font-size:18.31px;color:#1f2435;letter-spacing:0.425px;right:1916.13px;">Optimized</div>
<div style="position:absolute;left:1651.50px;top:839.60px;width:14.50px;height:1.40px;background:#1f2435"></div>
<div class="t" id="r1_7" style="top:678.77px;font-size:18.46px;color:#1f2435;right:1796.46px;">7</div>
<svg style="position:absolute;left:1792px;top:680px" width="20" height="20" viewBox="0 0 20 20"><circle cx="10" cy="9" r="8.1" fill="none" stroke="#e9c43c" stroke-width="1.6"/><path d="M10.2 4.3 V9.3 L13.6 11.7" fill="none" stroke="#e9c43c" stroke-width="1.6" stroke-linecap="round" stroke-linejoin="round"/></svg>
<div style="position:absolute;left:1993.50px;top:688.80px;width:14.50px;height:1.40px;background:#1f2435"></div>
<div style="position:absolute;left:2031.00px;top:652.40px;width:270.00px;height:74.10px;background:#fff;border:1px solid #e2e2e2;border-radius:4px;box-sizing:border-box"></div>
<div class="t" id="r1_db" style="top:674.51px;font-size:18.90px;color:#1f2435;letter-spacing:-0.476px;right:1367.77px;">$473.46</div>
<svg style="position:absolute;left:2237.5px;top:672.5px" width="42" height="36" viewBox="0 0 42 36"><g fill="none" stroke="#2d68d4" stroke-width="1.75" stroke-linecap="round"><rect x="7.8" y="7.5" width="26.5" height="24.8" rx="5.2"/><path d="M21 1 V7.5"/><circle cx="14.7" cy="16.9" r="3.2"/><circle cx="27.2" cy="16.9" r="3.2"/><path d="M9.5 26.1 H33" stroke-dasharray="2.6 3.4" stroke-linecap="round"/><path d="M4.6 13.4 Q1.3 13.8 1.3 17.2 V22.8 Q1.3 26.2 4.6 26.5 M37.4 13.4 Q40.7 13.8 40.7 17.2 V22.8 Q40.7 26.2 37.4 26.5"/></g></svg>
<svg style="position:absolute;left:2417.5px;top:672.5px" width="42" height="36" viewBox="0 0 42 36"><g fill="none" stroke="#2d68d4" stroke-width="1.75" stroke-linecap="round"><rect x="7.8" y="7.5" width="26.5" height="24.8" rx="5.2"/><path d="M21 1 V7.5"/><circle cx="14.7" cy="16.9" r="3.2"/><circle cx="27.2" cy="16.9" r="3.2"/><path d="M9.5 26.1 H33" stroke-dasharray="2.6 3.4" stroke-linecap="round"/><path d="M4.6 13.4 Q1.3 13.8 1.3 17.2 V22.8 Q1.3 26.2 4.6 26.5 M37.4 13.4 Q40.7 13.8 40.7 17.2 V22.8 Q40.7 26.2 37.4 26.5"/></g></svg>
<div style="position:absolute;left:2624.50px;top:688.80px;width:14.50px;height:1.40px;background:#1f2435"></div>
<div style="position:absolute;left:2804.50px;top:688.80px;width:14.50px;height:1.40px;background:#1f2435"></div>
<div style="position:absolute;left:2984.50px;top:688.80px;width:14.50px;height:1.40px;background:#1f2435"></div>
<div style="position:absolute;left:3164.50px;top:688.80px;width:14.50px;height:1.40px;background:#1f2435"></div>
<div style="position:absolute;left:3524.50px;top:688.80px;width:14.50px;height:1.40px;background:#1f2435"></div>
<div style="position:absolute;left:2804.50px;top:764.50px;width:14.50px;height:1.40px;background:#1f2435"></div>
<div style="position:absolute;left:3164.50px;top:764.50px;width:14.50px;height:1.40px;background:#1f2435"></div>
<div style="position:absolute;left:3524.50px;top:764.50px;width:14.50px;height:1.40px;background:#1f2435"></div>
<div class="t" id="r2_opt2" style="top:754.40px;font-size:18.31px;color:#1f2435;letter-spacing:-0.010px;right:584.17px;">Optimized</div>
<div style="position:absolute;left:2804.50px;top:839.60px;width:14.50px;height:1.40px;background:#1f2435"></div>
<div style="position:absolute;left:2984.50px;top:839.60px;width:14.50px;height:1.40px;background:#1f2435"></div>
<div style="position:absolute;left:3164.50px;top:839.60px;width:14.50px;height:1.40px;background:#1f2435"></div>
<div style="position:absolute;left:3524.50px;top:839.60px;width:14.50px;height:1.40px;background:#1f2435"></div>
<div style="position:absolute;left:2633.00px;top:764.50px;width:5.30px;height:1.40px;background:#1f2435"></div>
<div style="position:absolute;left:2633.00px;top:839.60px;width:5.30px;height:1.40px;background:#1f2435"></div>
<div style="position:absolute;left:468.00px;top:72.00px;width:24.00px;height:1445.00px;background:linear-gradient(90deg,rgba(0,0,0,0.36) 0,rgba(0,0,0,0.17) 3px,rgba(0,0,0,0.07) 8px,rgba(0,0,0,0) 19px);-webkit-mask-image:linear-gradient(180deg,rgba(0,0,0,0.2) 0,#000 22px)"></div>
<svg style="position:absolute;left:2060px;top:560px" width="110" height="95" viewBox="2060 560 110 95">
<defs><filter id="ash" x="-30%" y="-30%" width="160%" height="160%"><feDropShadow dx="-0.3" dy="0" stdDeviation="2.3" flood-color="#000" flood-opacity="0.75"/></filter></defs>
<g filter="url(#ash)"><path d="M2076 576.5 L2135 623" stroke="#b0377a" stroke-width="8.4" stroke-linecap="round"/>
<path d="M2155.9 640.7 L2121.9 635.7 L2143.5 609.1 Z" fill="#b0377a" stroke="#b0377a" stroke-width="0.8" stroke-linejoin="miter"/></g></svg>
<div style="position:absolute;left:1699.30px;top:733.00px;width:933.70px;height:459.00px;background:#fff;border-radius:6px;box-shadow:0 2px 22px rgba(20,30,50,0.30),0 0 5px rgba(0,0,0,0.22)"></div>
<div class="t" id="m_title" style="top:765.14px;font-size:32.56px;color:#4a4a4a;letter-spacing:-0.051px;left:1751.32px;">Daily Budget</div>
<svg style="position:absolute;left:2546px;top:771px" width="25" height="25" viewBox="0 0 25 25"><path d="M3 3 L22 22 M22 3 L3 22" stroke="#555" stroke-width="3.2"/></svg>
<div class="t" id="m_eli" style="top:839.50px;font-size:23.98px;color:#4a4a4a;letter-spacing:-0.409px;left:1752.12px;">EXAMPLE LINE ITEM</div>
<div class="t" id="m_pacing" style="top:908.50px;font-size:17.72px;color:#777;letter-spacing:-0.574px;left:1752.50px;">PACING</div>
<div style="position:absolute;left:1826.0px;top:907.3px;width:22.0px;height:22.0px;border-radius:50%;background:#bdbec2"></div>
<svg style="position:absolute;left:1826px;top:907px" width="22" height="22" viewBox="0 0 22 22"><circle cx="11" cy="6.6" r="1.5" fill="#fff"/><path d="M9.2 9.6 H11.8 V16.2 M9.3 16.4 H13.2" fill="none" stroke="#fff" stroke-width="2"/></svg>
<div class="t" id="m_db" style="top:908.50px;font-size:17.72px;color:#777;letter-spacing:-0.644px;left:2313.90px;">DAILY BUDGET</div>
<div style="position:absolute;left:1753.40px;top:935.00px;width:539.30px;height:56.00px;background:#fff;border:1.6px solid #3a70d9;border-radius:6px;box-sizing:border-box"></div>
<div class="t" id="m_opt" style="top:951.48px;font-size:22.24px;color:#1f2435;letter-spacing:-0.218px;left:1771.79px;">Optimized</div>
<div style="position:absolute;left:1772.00px;top:952.00px;width:2.00px;height:22.00px;background:#1f2435"></div>
<svg style="position:absolute;left:2250px;top:955px" width="26" height="19" viewBox="0 0 26 19"><path d="M4.5 5.5 L13 14 L21.5 5.5" fill="none" stroke="#222" stroke-width="3.4" stroke-linecap="round" stroke-linejoin="round"/></svg>
<div style="position:absolute;left:2315.40px;top:935.00px;width:242.30px;height:56.00px;background:linear-gradient(90deg,#fff 0,#fff 25px,#f7f7f7 25px);border:1px solid #dcdcdc;border-radius:6px;box-sizing:border-box"></div>
<div class="t" id="m_dollar" style="top:951.31px;font-size:23.26px;color:#888;left:2321.20px;">$</div>
<div class="t" id="m_amt" style="top:951.90px;font-size:22.33px;color:#999;letter-spacing:-0.473px;left:2339.86px;">473.46</div>
<div class="t" id="m_cancel" style="top:1126.88px;font-size:22.47px;color:#4a5058;letter-spacing:-0.569px;left:2403.26px;">Cancel</div>
<div style="position:absolute;left:2507.00px;top:1107.80px;width:89.80px;height:57.80px;background:#9ec8f8;border-radius:8px"></div>
<div class="t" id="m_save" style="top:1126.74px;font-size:21.57px;color:#fff;letter-spacing:-0.512px;left:2527.33px;">Save</div>
<div style="position:absolute;left:1752.60px;top:1005.30px;width:541.20px;height:274.70px;background:#fff;border:1px solid #dcdcdc;border-radius:7px;box-sizing:border-box;box-shadow:0 4px 10px rgba(0,0,0,0.14)"></div>
<div class="t" id="dd_opt" style="top:1032.28px;font-size:22.82px;color:#a8a8a8;letter-spacing:-0.491px;left:1774.07px;">Optimized</div>
<div class="t" id="dd_even" style="top:1097.48px;font-size:22.82px;color:#1f2435;letter-spacing:-0.796px;left:1773.17px;">Even</div>
<div class="t" id="dd_man" style="top:1162.68px;font-size:22.82px;color:#1f2435;letter-spacing:-0.802px;left:1773.17px;">Manual</div>
<div class="t" id="dd_pace" style="top:1227.18px;font-size:22.82px;color:#1f2435;letter-spacing:-0.780px;left:1773.17px;">Pace Ahead</div>
</body></html>
